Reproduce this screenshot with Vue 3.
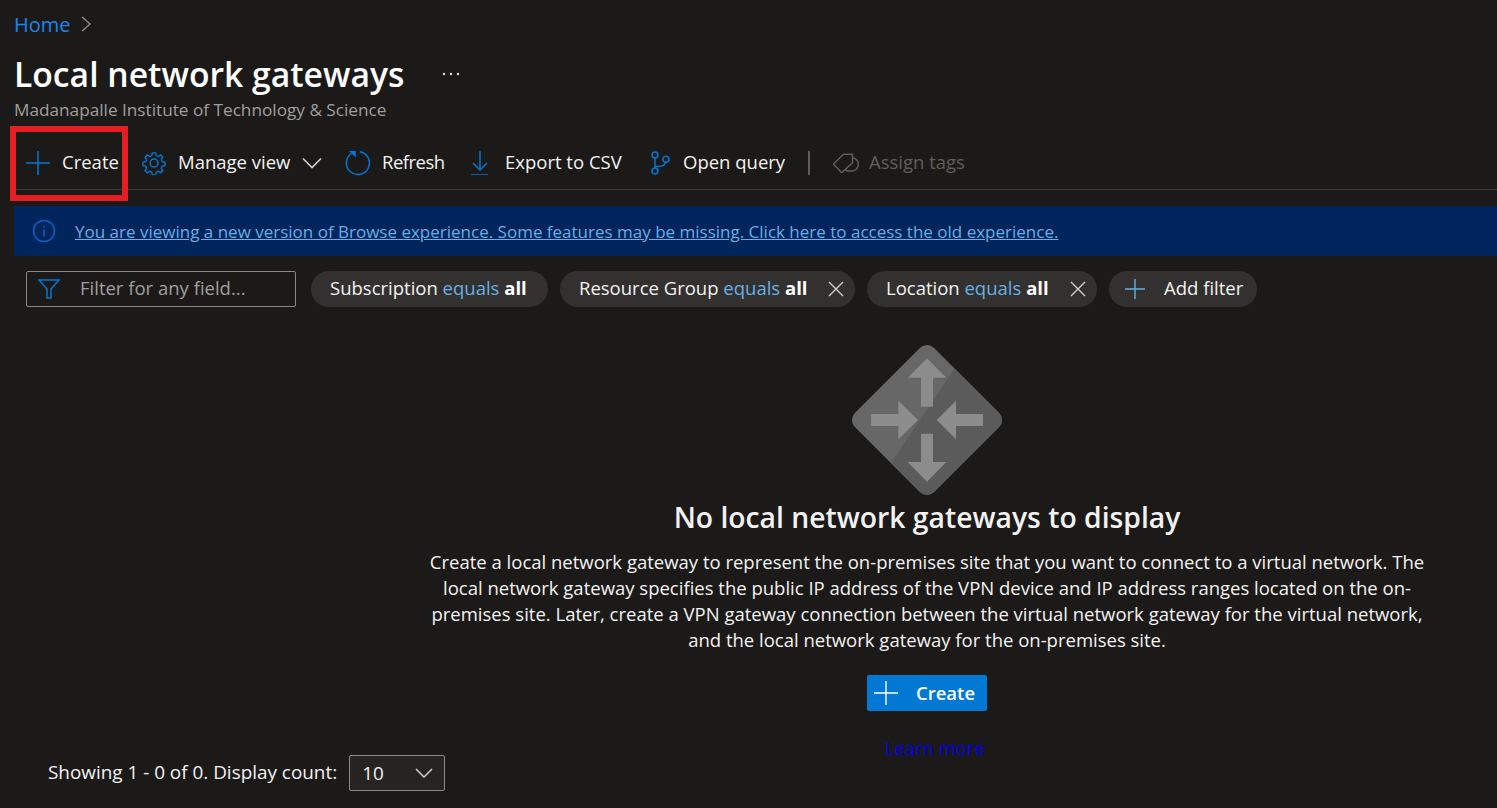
<script setup>
const chips = [
  { id: 'sub', label: 'Subscription', closable: false },
  { id: 'rg', label: 'Resource Group', closable: true },
  { id: 'loc', label: 'Location', closable: true }
];

const paragraph = [
  'Create a local network gateway to represent the on-premises site that you want to connect to a virtual network. The',
  'local network gateway specifies the public IP address of the VPN device and IP address ranges located on the on-',
  'premises site. Later, create a VPN gateway connection between the virtual network gateway for the virtual network,',
  'and the local network gateway for the on-premises site.'
];
</script>

<template>
  <div class="page">
    <nav class="crumbs">
      <a class="home">Home</a>
      <svg class="crumb-arrow" width="12" height="18" viewBox="0 0 12 18"><path d="M2 2l8 7-8 7" /></svg>
    </nav>

    <header class="head">
      <div class="title-row">
        <h1>Local network gateways</h1>
        <svg class="more" width="18" height="4" viewBox="0 0 18 4">
          <circle cx="2" cy="2" r="1.200" /><circle cx="9" cy="2" r="1.200" /><circle cx="16" cy="2" r="1.200" />
        </svg>
      </div>
      <div class="org">Madanapalle Institute of Technology &amp; Science</div>
    </header>

    <div class="toolbar">
      <button class="tool t-create">
        <svg class="ic" width="24" height="24" viewBox="0 0 24 24"><path d="M12 0v24M0 12h24" /></svg>
        <span>Create</span>
      </button>
      <span class="red-box"></span>
      <button class="tool t-manage">
        <svg class="ic" width="24" height="24" viewBox="0 0 24 24">
          <path d="M10.200 1h3.600l.6 3 2.200 1 2.600-1.700 2.500 2.500-1.700 2.600 1 2.200 3 .6v3.600l-3 .6-1 2.200 1.700 2.600-2.500 2.500-2.600-1.700-2.200 1-.6 3h-3.600l-.6-3-2.200-1-2.600 1.700-2.500-2.500 1.700-2.600-1-2.200-3-.6v-3.600l3-.6 1-2.200-1.700-2.600 2.500-2.500 2.600 1.700 2.200-1z" transform="translate(12 12) scale(.92) translate(-12 -12)" />
          <circle cx="12" cy="12" r="4" />
        </svg>
        <span>Manage view</span>
        <svg class="chev" width="20" height="12" viewBox="0 0 20 12"><path d="M1 1.500l9 9 9-9" /></svg>
      </button>
      <button class="tool t-refresh">
        <svg class="ic" width="26" height="26" viewBox="0 0 26 26">
          <path d="M15 1.700A11.500 11.500 0 1 1 6.500 3.500" />
          <path class="solid" d="M4 1h6.800v6.500z" />
        </svg>
        <span>Refresh</span>
      </button>
      <button class="tool t-export">
        <svg class="ic" width="20" height="24" viewBox="0 0 20 24"><path d="M10 0v19M3 12l7 7 7-7M1 24h17" /></svg>
        <span>Export to CSV</span>
      </button>
      <button class="tool t-query">
        <svg class="ic" width="20" height="24" viewBox="0 0 20 24">
          <circle cx="5" cy="4" r="3" /><circle cx="5" cy="20" r="3" /><circle cx="16" cy="8.300" r="3" />
          <path d="M5 7v10M5 15.500h4c4 0 6-1.500 6.500-4.300" />
        </svg>
        <span>Open query</span>
      </button>
      <span class="divider"></span>
      <button class="tool t-tags disabled">
        <svg class="ic" width="26" height="20" viewBox="0 0 26 20">
          <path d="M.5 11l10-9.700h9v8.400L8.700 19.700z" />
          <path d="M19.300 4.700a6.600 6.600 0 0 1 6 6.600 6.700 6.700 0 0 1-8 6.600 6 6 0 0 1-5-1" />
        </svg>
        <span>Assign tags</span>
      </button>
    </div>

    <div class="banner">
      <svg width="24" height="24" viewBox="0 0 24 24" class="info">
        <circle cx="12" cy="12" r="10.500" /><path d="M12 10.500v7M12 7v1.500" />
      </svg>
      <a>You are viewing a new version of Browse experience. Some features may be missing. Click here to access the old experience.</a>
    </div>

    <div class="filters">
      <div class="filter-input">
        <svg width="22" height="20" viewBox="0 0 22 20"><path d="M1 1h20l-8 9v9h-4v-9z" /></svg>
        <span>Filter for any field...</span>
      </div>
      <div v-for="chip in chips" :key="chip.id" class="chip" :class="chip.id">
        <span class="chip-text">{{ chip.label }} <em>equals</em> <b>all</b></span>
        <svg v-if="chip.closable" class="x" width="16" height="16" viewBox="0 0 16 16"><path d="M1 1l14 14M15 1L1 15" /></svg>
      </div>
      <div class="chip add">
        <svg width="20" height="20" viewBox="0 0 20 20"><path d="M10 0v20M0 10h20" /></svg>
        <span class="chip-text">Add filter</span>
      </div>
    </div>

    <section class="empty">
      <svg class="hero" width="152" height="152" viewBox="0 0 152 152">
        <defs>
          <clipPath id="diamond"><rect x="20" y="20" width="112" height="112" rx="10" transform="rotate(45 76 76)" /></clipPath>
        </defs>
        <g clip-path="url(#diamond)">
          <rect width="152" height="152" fill="#676767" />
          <path d="M104 24.300L40.700 117.700 76 160h84V76z" fill="#5b5b5b" />
        </g>
        <g fill="#8c8c8c">
          <path d="M76 14.300l19.300 19.400H82v29H70v-29H56.700z" />
          <path d="M76 137.700L56.700 118H70V89.700h12V118h13.300z" />
          <path d="M67 76L47.300 56.700V70H20v12h27.300v13.300z" />
          <path d="M85.700 76L105 56.700V70h27v12h-27v13.300z" />
        </g>
      </svg>
      <h2>No local network gateways to display</h2>
      <p v-for="line in paragraph" :key="line">{{ line }}</p>
      <button class="primary">
        <svg width="24" height="24" viewBox="0 0 24 24"><path d="M12 0v24M0 12h24" /></svg>
        <span>Create</span>
      </button>
      <a class="learn">Learn more</a>
    </section>

    <footer class="foot">
      <span>Showing 1 - 0 of 0. Display count:</span>
      <div class="select">
        <span>10</span>
        <svg width="18" height="10" viewBox="0 0 18 10"><path d="M1 1l8 8 8-8" /></svg>
      </div>
    </footer>
  </div>
</template>

<style>
html, body {
  margin: 0;
  background: #1b1a19;
}
</style>

<style scoped>
.page {
  position: relative;
  height: 808px;
  overflow: hidden;
  background: #1b1a19;
  color: #f3f2f1;
  font-family: "Open Sans", "Noto Sans", sans-serif;
  font-size: 18.500px;
  box-sizing: border-box;
  padding-left: 14px;
}

svg {
  fill: none;
  flex: none;
}

.crumbs {
  height: 48px;
  display: flex;
  align-items: center;
  gap: 9px;
}

.home {
  color: #1b85ee;
  font-size: 20px;
}

.crumb-arrow path {
  stroke: #8a8886;
  stroke-width: 1.400;
}

.title-row {
  display: flex;
  align-items: center;
  height: 44px;
  margin-top: 4px;
}

h1 {
  margin: 0;
  font-size: 33.700px;
  font-weight: 600;
  color: #fff;
}

.more {
  margin-left: 38px;
}

.more circle {
  fill: #e1dfdd;
}

.org {
  color: #a19f9d;
  font-size: 17.200px;
  height: 26px;
  line-height: 24px;
  margin-top: 2px;
}

.toolbar {
  position: relative;
  display: flex;
  align-items: center;
  height: 49px;
  margin-top: 14px;
  padding: 0 0 2px 12px;
  border-bottom: 1px solid #3b3a39;
  gap: 24px;
}

.tool {
  display: flex;
  align-items: center;
  flex: none;
  gap: 12px;
  background: none;
  border: 0;
  padding: 0;
  font: inherit;
  color: #f3f2f1;
  white-space: nowrap;
}

.tool span {
  padding-bottom: 2px;
}

.t-create { width: 92px; }
.t-manage { width: 179px; }
.t-refresh { width: 101px; gap: 11px; letter-spacing: -.5px; }
.t-export { width: 156px; gap: 15px; }
.t-query { width: 135px; gap: 13px; margin-right: -1px; }
.t-tags { gap: 10px; }

.ic path,
.ic circle {
  stroke: #0078d4;
  stroke-width: 1.500;
}

.ic path.solid {
  fill: #0078d4;
  stroke: none;
}

.chev path {
  stroke: #d2d0ce;
  stroke-width: 1.600;
}

.red-box {
  position: absolute;
  left: -4px;
  top: -12px;
  box-sizing: border-box;
  width: 118px;
  height: 75px;
  border: 6px solid #e81c23;
  pointer-events: none;
}

.divider {
  width: 2px;
  height: 24px;
  background: #605e5c;
  margin-right: -1px;
}

.tool.disabled {
  color: #605e5c;
}

.tool.disabled .ic path {
  stroke: #605e5c;
}

.banner {
  display: flex;
  align-items: center;
  gap: 19px;
  height: 50px;
  margin-top: 16px;
  padding-left: 18px;
  background: #00245c;
  font-size: 17px;
}

.banner a {
  color: #69afe5;
  text-decoration: underline;
}

.info circle,
.info path {
  stroke: #0a62c4;
  stroke-width: 1.500;
}

.filters {
  display: flex;
  align-items: center;
  gap: 12px;
  margin-top: 15px;
  padding-left: 12px;
}

.filter-input {
  box-sizing: border-box;
  width: 270px;
  height: 36px;
  margin-right: 3px;
  display: flex;
  align-items: center;
  gap: 20px;
  padding-left: 11px;
  border: 1px solid #8a8886;
  border-radius: 2px;
  color: #a19f9d;
}

.filter-input span {
  padding-bottom: 3px;
}

.filter-input path {
  stroke: #0078d4;
  stroke-width: 1.500;
}

.chip {
  box-sizing: border-box;
  height: 36px;
  display: flex;
  align-items: center;
  justify-content: space-between;
  padding: 0 11px 0 19px;
  border-radius: 18px;
  background: #323130;
}

.chip-text {
  padding-bottom: 3px;
}

.chip.sub { width: 237px; }
.chip.rg { width: 295px; }
.chip.loc { width: 230px; }
.chip.add { width: 148px; padding-left: 16px; justify-content: flex-start; gap: 19px; }

.chip-text em {
  font-style: normal;
  color: #69afe5;
}

.chip-text b {
  font-weight: 700;
  color: #fff;
}

.x path {
  stroke: #d2d0ce;
  stroke-width: 1.400;
}

.add path {
  stroke: #69afe5;
  stroke-width: 1.400;
}

.empty {
  display: flex;
  flex-direction: column;
  align-items: center;
  width: 1000px;
  margin-left: 413px;
  margin-top: 37px;
}

h2 {
  margin: 0 0 11px;
  font-size: 28.300px;
  font-weight: 600;
  color: #f3f2f1;
  height: 42px;
  line-height: 42px;
}

p {
  margin: 0;
  height: 26px;
  line-height: 26px;
  white-space: nowrap;
  font-size: 18.500px;
}

.primary {
  display: flex;
  align-items: center;
  flex: none;
  gap: 18px;
  width: 120px;
  height: 36px;
  margin-top: 22px;
  padding: 0 0 0 7px;
  box-sizing: border-box;
  border: 0;
  border-radius: 2px;
  background: #0078d4;
  color: #fff;
  font: inherit;
  font-weight: 600;
}

.primary span {
  padding-bottom: 2px;
}

.primary path {
  stroke: #fff;
  stroke-width: 1.400;
}

.learn {
  margin-top: 24px;
  margin-left: 16px;
  color: #0000e6;
}

.foot {
  position: absolute;
  left: 48px;
  top: 755px;
  display: flex;
  align-items: center;
  gap: 12px;
  font-size: 18.900px;
}

.foot > span {
  padding-bottom: 2px;
}

.select {
  box-sizing: border-box;
  width: 96px;
  height: 36px;
  display: flex;
  align-items: center;
  justify-content: space-between;
  padding: 0 11px 0 12px;
  border: 1px solid #8a8886;
  border-radius: 2px;
  background: #252423;
}

.select path {
  stroke: #d2d0ce;
  stroke-width: 1.500;
}
</style>
